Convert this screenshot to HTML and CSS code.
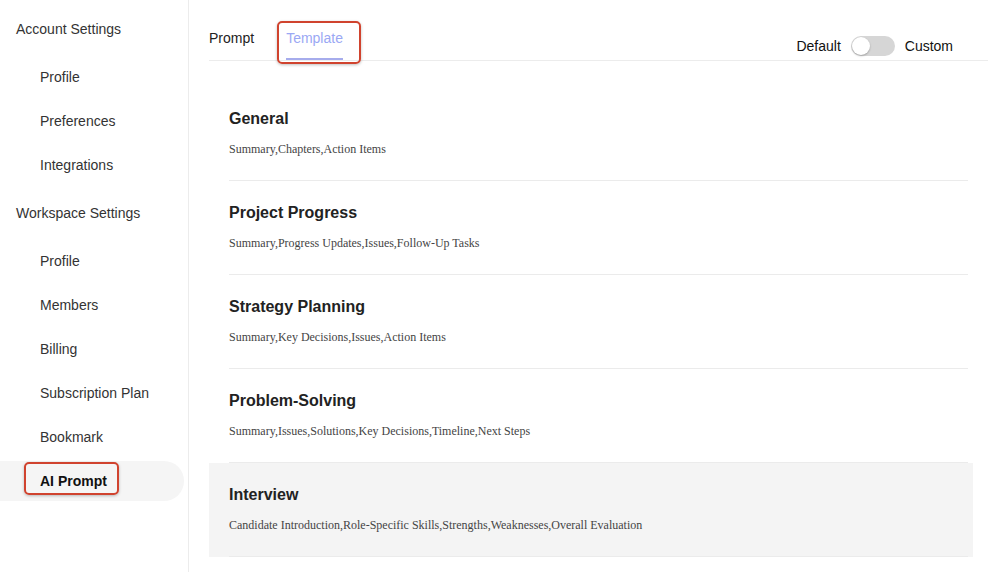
FILE: index.html
```html
<!DOCTYPE html>
<html>
<head>
<meta charset="utf-8">
<link rel="stylesheet" href="styles.css">
</head>
<body>
<div class="app">
  <aside class="sidebar">
    <div class="sec-head">Account Settings</div>
    <div class="item">Profile</div>
    <div class="item">Preferences</div>
    <div class="item">Integrations</div>
    <div class="sec-head sec-gap">Workspace Settings</div>
    <div class="item">Profile</div>
    <div class="item">Members</div>
    <div class="item">Billing</div>
    <div class="item">Subscription Plan</div>
    <div class="item">Bookmark</div>
    <div class="item active"><span class="active-label">AI Prompt<span class="mark mark-ai"></span></span></div>
  </aside>
  <main class="main">
    <div class="header">
      <div class="tabs">
        <div class="tab">Prompt</div>
        <div class="tab tab-on">Template<span class="mark mark-tab"></span></div>
      </div>
      <div class="switch-wrap">
        <span>Default</span>
        <span class="switch"><span class="knob"></span></span>
        <span>Custom</span>
      </div>
    </div>
    <div class="list">
      <div class="row"><div class="row-in"><div class="title">General</div><div class="desc">Summary,Chapters,Action Items</div></div></div>
      <div class="row"><div class="row-in"><div class="title">Project Progress</div><div class="desc">Summary,Progress Updates,Issues,Follow-Up Tasks</div></div></div>
      <div class="row"><div class="row-in"><div class="title">Strategy Planning</div><div class="desc">Summary,Key Decisions,Issues,Action Items</div></div></div>
      <div class="row"><div class="row-in"><div class="title">Problem-Solving</div><div class="desc">Summary,Issues,Solutions,Key Decisions,Timeline,Next Steps</div></div></div>
      <div class="row row-hl"><div class="row-in"><div class="title">Interview</div><div class="desc">Candidate Introduction,Role-Specific Skills,Strengths,Weaknesses,Overall Evaluation</div></div></div>
    </div>
  </main>
</div>
</body>
</html>
```
FILE: styles.css
```css
* { box-sizing: border-box; }
html, body { margin: 0; padding: 0; background: #fff; }
body { font-family: "Liberation Sans", Arial, sans-serif; color: #333; font-size: 14px; }
.app { display: flex; height: 572px; overflow: hidden; }
.sidebar {
  width: 189px; flex: none; border-right: 1px solid #ececec;
  padding-top: 7px; height: 572px;
}
.sec-head { height: 44px; line-height: 44px; padding-left: 16px; color: #333; margin-bottom: 4px; }
.sec-gap { margin-top: 4px; }
.item { height: 44px; line-height: 44px; padding-left: 40px; color: #333; }
.item.active {
  height: 40px; line-height: 40px; margin: 2px 4px 2px 0;
  background: #f5f5f5; border-radius: 0 20px 20px 0;
  font-weight: bold; color: #111;
}
.active-label { position: relative; display: inline-block; }
.mark {
  position: absolute; border: 2.5px solid #d0432e; border-radius: 5px;
  box-shadow: 0 1px 3px rgba(0,0,0,0.25);
}
.mark-ai { left: -16px; top: 1px; width: 95px; height: 33px; }
.main { flex: 1; padding-left: 20px; }
.header {
  height: 61px; border-bottom: 1px solid #ececec;
  display: flex; justify-content: space-between;
}
.tabs { display: flex; gap: 32px; }
.tab {
  position: relative; height: 60px; padding-top: 28px; line-height: 20px;
  color: #222; font-size: 14px;
}
.tab-on { color: #9aa8f4; border-bottom: 2px solid #a6acec; }
.mark-tab { left: -9px; top: 21px; width: 84px; height: 43px; }
.switch-wrap {
  display: flex; align-items: center; gap: 10px; height: 20px;
  margin-top: 36px; margin-right: 35px; color: #111; font-size: 14px;
}
.switch {
  width: 44px; height: 20px; border-radius: 10px; background: #d6d6d6;
  position: relative; display: inline-block;
}
.knob {
  position: absolute; left: 1px; top: 1px; width: 18px; height: 18px;
  background: #fff; border-radius: 50%; box-shadow: 0 1px 2px rgba(0,0,0,0.25);
}
.list { margin-top: 26px; margin-right: 15px; }
.row { height: 94px; padding-left: 20px; padding-right: 5px; }
.row-in { height: 94px; border-bottom: 1px solid #ebebeb; padding-top: 22px; }
.row-hl { background: #f4f4f4; }
.title { font-size: 16px; font-weight: bold; color: #222; line-height: 20px; }
.desc {
  font-family: "Liberation Serif", "Times New Roman", serif; font-size: 12px;
  color: #444; line-height: 20px; margin-top: 10px;
}
```
